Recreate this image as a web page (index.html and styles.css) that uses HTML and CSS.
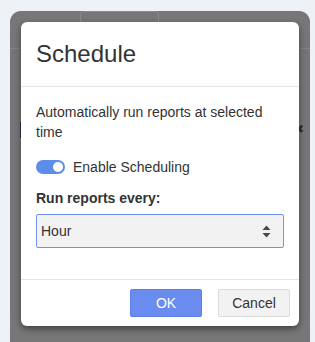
FILE: index.html
```html
<!DOCTYPE html>
<html>
<head>
<meta charset="utf-8">
<link rel="stylesheet" href="styles.css">
</head>
<body>
<div class="app">
  <div class="tabs">
    <div class="tab"></div>
  </div>
  <div class="app-row">
    <span class="mark"></span>
    <span class="close">&#x2716;</span>
  </div>
</div>

<div class="modal">
  <div class="modal-header">
    <h2 class="modal-title">Schedule</h2>
  </div>
  <div class="modal-body">
    <p class="desc">Automatically run reports at selected time</p>
    <label class="toggle-row">
      <span class="toggle"><span class="knob"></span></span>
      <span class="toggle-label">Enable Scheduling</span>
    </label>
    <div class="field-label">Run reports every:</div>
    <div class="select">
      <span class="select-value">Hour</span>
      <svg class="select-arrows" width="9" height="13" viewBox="0 0 9 13">
        <path d="M4.5 0.5 L8.5 5 L0.5 5 Z" fill="#4a4a4a"/>
        <path d="M0.5 8 L8.5 8 L4.5 12.5 Z" fill="#4a4a4a"/>
      </svg>
    </div>
  </div>
  <div class="modal-footer">
    <button class="btn btn-primary">OK</button>
    <button class="btn btn-default">Cancel</button>
  </div>
</div>
</body>
</html>
```

FILE: styles.css
```css
html, body {
  margin: 0;
  padding: 0;
}
body {
  background: #eef2f7;
  font-family: "Liberation Sans", Arial, sans-serif;
  color: #333;
  width: 315px;
  height: 342px;
  overflow: hidden;
  position: relative;
}
.app {
  margin: 11px 5px 0 10px;
  height: 331px;
  background: #777777;
  border-radius: 11px 11px 0 0;
  display: flex;
  flex-direction: column;
}
.tabs {
  height: 37px;
  border-bottom: 1px solid #848484;
  display: flex;
  align-items: flex-start;
}
.tab {
  margin-left: 70px;
  width: 77px;
  height: 36px;
  border: 1px solid #8a8a8a;
  border-bottom: none;
  border-radius: 4px 4px 0 0;
}
.app-row {
  display: flex;
  justify-content: space-between;
  align-items: flex-start;
  padding: 73px 6px 0 10px;
}
.mark {
  width: 2px;
  height: 16px;
  background: #2e3550;
}
.close {
  font-size: 12px;
  line-height: 14px;
  color: #2b2f3a;
}
.modal {
  position: absolute;
  left: 21px;
  top: 22px;
  width: 278px;
  background: #fff;
  border-radius: 6px;
  box-shadow: 0 3px 7px rgba(0, 0, 0, 0.45);
}
.modal-header {
  padding: 15px 15px;
  border-bottom: 1px solid #e5e5e5;
}
.modal-title {
  margin: 0;
  font-size: 24px;
  font-weight: normal;
  line-height: 34px;
  color: #333;
}
.modal-body {
  padding: 15px 15px 31px;
  font-size: 14px;
  line-height: 20px;
}
.desc {
  margin: 0 0 15px;
}
.toggle-row {
  display: flex;
  align-items: center;
  gap: 8px;
}
.toggle {
  width: 29px;
  height: 14px;
  border-radius: 7px;
  background: #5a8ee8;
  position: relative;
  display: block;
}
.knob {
  position: absolute;
  right: 2px;
  top: 2px;
  width: 10px;
  height: 10px;
  border-radius: 50%;
  background: #fff;
}
.field-label {
  margin-top: 11px;
  margin-bottom: 6px;
  font-weight: bold;
}
.select {
  height: 32px;
  border: 1px solid #7093f3;
  border-radius: 2px;
  background: #f2f2f2;
  display: flex;
  align-items: center;
  justify-content: space-between;
  padding: 0 12px 0 4px;
}
.select-value {
  color: #333;
}
.select-arrows {
  display: block;
}
.modal-footer {
  border-top: 1px solid #e5e5e5;
  padding: 9px 9px 9px;
  display: flex;
  justify-content: flex-end;
  gap: 16px;
}
.btn {
  width: 72px;
  height: 28px;
  font-family: "Liberation Sans", Arial, sans-serif;
  font-size: 14px;
  border-radius: 2px;
  padding: 0;
  margin: 0;
}
.btn-primary {
  background: #6a8cef;
  border: 1px solid #5d80e8;
  color: #fff;
}
.btn-default {
  background: #f2f2f2;
  border: 1px solid #dcdcdc;
  color: #333;
}
```
